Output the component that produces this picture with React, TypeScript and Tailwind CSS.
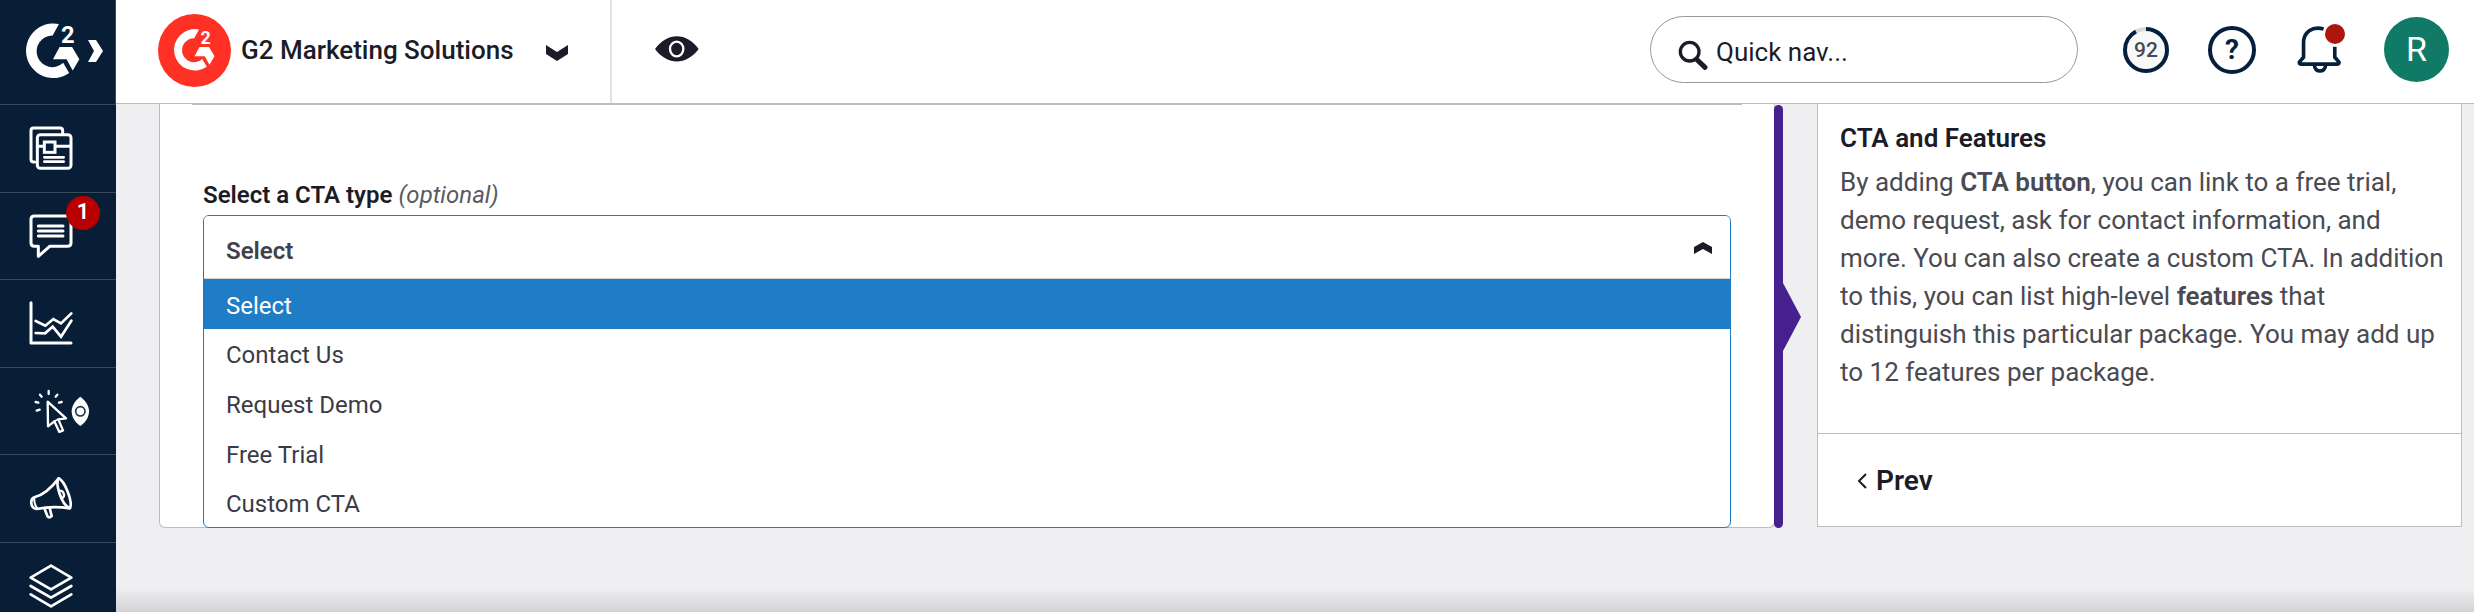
import { useState } from "react";
import type { ReactNode } from "react";

const CTA_TYPES = ["Select", "Contact Us", "Request Demo", "Free Trial", "Custom CTA"];

function G2Mark({ className }: { className: string }) {
  return (
    <svg viewBox="77 67 164 168" className={`overflow-visible ${className}`} fill="#fff" aria-hidden="true">
      <path d="M177 69 L158 104 A48 48 0 1 0 190 187 L208 218 A83 83 0 1 1 177 69 Z" />
      <path d="M179 139 H217 L239 176 L219 210 L200 176 H159 Z" />
      <text x="183" y="128" fontSize="72" fontWeight="700" fontFamily="Roboto, sans-serif">
        2
      </text>
    </svg>
  );
}

function NewsIcon() {
  return (
    <svg viewBox="86 379 132 132" className="size-11" fill="none" stroke="#fff" strokeWidth="9" aria-hidden="true">
      <path d="M103 487 H100 Q92 487 92 479 V393 Q92 385 100 385 H179 Q187 385 187 393 V399" strokeLinecap="round" />
      <rect x="111" y="405" width="101" height="101" rx="9" />
      <path d="M111 440 H132 M165 440 H212" />
      <rect x="132" y="427" width="32" height="31" />
      <path d="M132 473 H190 M132 486 H190" strokeLinecap="round" strokeWidth="8" />
    </svg>
  );
}

function ChatIcon() {
  return (
    <svg viewBox="86 640 132 132" className="size-11" fill="none" stroke="#fff" strokeWidth="9" aria-hidden="true">
      <path
        d="M102 646 H202 Q212 646 212 656 V727 Q212 737 202 737 H148 L114 767 V737 H102 Q92 737 92 727 V656 Q92 646 102 646 Z"
        strokeLinejoin="round"
      />
      <path d="M114 676 H188 M114 691 H188 M114 706 H188" strokeLinecap="round" />
    </svg>
  );
}

function ChartIcon() {
  return (
    <svg
      viewBox="86 -16 132 132"
      className="size-11"
      fill="none"
      stroke="#fff"
      strokeWidth="9"
      strokeLinecap="round"
      aria-hidden="true"
    >
      <path d="M92 -11 V110 H212" strokeLinejoin="round" />
      <path d="M106 44 L135 58 L159 38 L182 51 L213 21" strokeWidth="8" />
      <path d="M106 80 L134 81 L157 61 L182 91 L213 43" strokeWidth="8" />
    </svg>
  );
}

function CursorIcon() {
  return (
    <svg viewBox="86 246 183 132" className="h-11 w-[61px]" fill="none" stroke="#fff" strokeWidth="7" aria-hidden="true">
      <path d="M142 284 L143 358 L162 343 L177 375 L188 370 L174 337 L197 334 Z" strokeLinejoin="round" />
      <path d="M162 343 L174 337" strokeWidth="5" />
      <path
        d="M145 252 V261 M119 263 L124 269 M171 263 L166 269 M106 285 L114 287 M184 285 L176 287 M109 311 L118 308"
        strokeLinecap="round"
      />
      <path
        d="M240 269 C258 283 266 298 266 313 C266 330 256 347 240 357 C224 347 214 330 214 313 C214 298 222 283 240 269 Z"
        fill="#fff"
        stroke="none"
      />
      <circle cx="240" cy="313" r="14" stroke="#1e334c" strokeWidth="5" />
    </svg>
  );
}

function MegaphoneIcon() {
  return (
    <svg
      viewBox="86 510 132 132"
      className="size-11"
      fill="none"
      stroke="#fff"
      strokeWidth="8"
      strokeLinejoin="round"
      strokeLinecap="round"
      aria-hidden="true"
    >
      <path d="M102 574 C128 567 154 545 175 517 C192 524 218 586 209 607 C178 602 142 602 109 609 C90 607 88 580 102 574 Z" />
      <path d="M102 575 C101 589 104 600 112 608" strokeWidth="6" />
      <path d="M175 517 C164 532 182 594 207 606" />
      <path d="M176 555 C188 550 198 570 184 577" strokeWidth="7" />
      <path d="M133 609 L142 632 Q147 637 154 630 L148 606" />
    </svg>
  );
}

function LayersIcon() {
  return (
    <svg
      viewBox="86 772 132 132"
      className="size-11"
      fill="none"
      stroke="#fff"
      strokeWidth="8"
      strokeLinejoin="round"
      strokeLinecap="round"
      aria-hidden="true"
    >
      <path d="M152 777 L213 813 L152 848 L91 813 Z" />
      <path d="M91 838 L152 873 L213 838" />
      <path d="M91 863 L152 899 L213 863" />
    </svg>
  );
}

function BellIcon() {
  return (
    <svg viewBox="51 75 132 146" className="h-12 w-11" fill="none" stroke="#04203d" strokeWidth="11" aria-hidden="true">
      <path d="M131 84 C96 74 70 95 70 126 V170 L57 185 Q57 191 64 191 H171 Q178 191 178 185 L165 170 V138" strokeLinejoin="round" />
      <path d="M103 194 C103 218 137 218 137 194" />
    </svg>
  );
}

const NAV_ITEMS: { label: string; icon: ReactNode; count?: number }[] = [
  { label: "Profile", icon: <NewsIcon /> },
  { label: "Messages", icon: <ChatIcon />, count: 1 },
  { label: "Analytics", icon: <ChartIcon /> },
  { label: "Buyer intent", icon: <CursorIcon /> },
  { label: "Campaigns", icon: <MegaphoneIcon /> },
  { label: "Integrations", icon: <LayersIcon /> },
];

function Sidebar() {
  return (
    <aside className="flex w-[116px] shrink-0 flex-col bg-[#081e36]">
      <a
        href="#home"
        aria-label="Home"
        className="flex h-[105px] shrink-0 items-center gap-2 border-r border-b border-[#38495c] pb-[3px] pl-[26px]"
      >
        <G2Mark className="h-14 w-[54px]" />
        <svg viewBox="0 0 16 22" className="h-[22px] w-4" fill="#fff" aria-hidden="true">
          <path d="M0 0 H8 L15 11 L8 22 H0 L6 11 Z" />
        </svg>
      </a>
      <nav className="grid h-[525px] shrink-0 grid-rows-6">
        {NAV_ITEMS.map((item) => (
          <a
            key={item.label}
            href={`#${item.label.toLowerCase().replace(" ", "-")}`}
            aria-label={item.label}
            className="relative flex items-center border-b border-[#38495c] pl-[29px]"
          >
            {item.icon}
            {item.count && (
              <span className="absolute top-[3px] left-[66px] flex size-[34px] items-center justify-center rounded-full bg-[#b80000] pb-[2px] text-[22px] leading-none font-semibold text-white">
                {item.count}
              </span>
            )}
          </a>
        ))}
      </nav>
    </aside>
  );
}

function Header() {
  return (
    <header className="flex h-[104px] shrink-0 items-stretch border-b border-[#bdbdbd] bg-white">
      <button type="button" className="flex items-center border-r-2 border-[#e2e2e2] pr-[42px] pb-[3px] pl-[42px]">
        <span className="flex size-[73px] items-center justify-center rounded-full bg-[#ff3024]">
          <G2Mark className="h-[42px] w-[41px]" />
        </span>
        <span className="ml-[10px] text-[26px] font-medium text-[#1b1c27]">G2 Marketing Solutions</span>
        <svg viewBox="0 0 22 16" className="mt-[6px] ml-8 h-4 w-[22px]" fill="#1b1c27" aria-hidden="true">
          <path d="M0 0 L11 7 L22 0 V9 L11 16 L0 9 Z" />
        </svg>
      </button>
      <button type="button" aria-label="Preview" className="pb-[5px] pl-[43px]">
        <svg viewBox="403 110 132 78" className="h-[26px] w-11" aria-hidden="true">
          <path d="M403 149 C440 98 497 98 534 149 C497 199 440 199 403 149 Z" fill="#1b1c27" />
          <ellipse cx="468" cy="149" rx="20" ry="22" fill="none" stroke="#fff" strokeWidth="7" />
        </svg>
      </button>
      <div className="ml-auto flex items-center pr-[25px] pb-1">
        <label className="flex h-[67px] w-[428px] items-center rounded-full border border-[#999] pl-[27px]">
          <svg viewBox="114 121 90 90" className="mt-[10px] size-[30px]" fill="none" stroke="#1b1c27" aria-hidden="true">
            <circle cx="149" cy="156" r="28" strokeWidth="10" />
            <path d="M172 181 L195 203" strokeWidth="15" strokeLinecap="round" />
          </svg>
          <input
            type="search"
            aria-label="Quick nav"
            placeholder="Quick nav..."
            className="mt-[6px] ml-2 min-w-0 flex-1 bg-transparent text-[26px] text-[#1b1c27] outline-none placeholder:text-[#1b1c27]"
          />
        </label>
        <button
          type="button"
          aria-label="Profile score"
          className="relative ml-11 flex size-12 items-center justify-center text-[21px] font-medium text-[#494951]"
        >
          <svg viewBox="0 0 48 48" className="absolute inset-0 size-12" fill="none" strokeWidth="4" aria-hidden="true">
            <circle cx="24" cy="24" r="21" stroke="#d3dae0" fill="#f8f8f8" />
            <circle cx="24" cy="24" r="21" stroke="#04203d" pathLength="100" strokeDasharray="92 8" transform="rotate(-90 24 24)" />
          </svg>
          <span className="relative pt-[2px]">92</span>
        </button>
        <button
          type="button"
          aria-label="Help"
          className="ml-[38px] flex size-12 items-center justify-center rounded-full border-4 border-[#04203d] text-[28px] leading-none font-bold text-[#04203d]"
        >
          ?
        </button>
        <button type="button" aria-label="Notifications" className="relative ml-[41px]">
          <BellIcon />
          <span className="absolute -top-[2px] left-7 size-5 rounded-full bg-[#ae1410]" />
        </button>
        <button
          type="button"
          aria-label="Account"
          className="ml-[43px] flex size-[65px] items-center justify-center rounded-full bg-[#117a67] text-[34px] text-white"
        >
          R
        </button>
      </div>
    </header>
  );
}

function CtaTypeField() {
  const [value, setValue] = useState(CTA_TYPES[0]);
  return (
    <div className="flex flex-col">
      <label htmlFor="cta-type" className="mb-[5px] text-[24px] leading-[30px] font-semibold text-[#1b1c27]">
        Select a CTA type <em className="font-normal text-[#5a5a62]">(optional)</em>
      </label>
      <div className="overflow-hidden rounded-md border border-[#207cc4]">
        <div className="relative">
          <select
            id="cta-type"
            value={value}
            onChange={(event) => setValue(event.target.value)}
            className="block h-[63px] w-full appearance-none border-b border-[#d2d2d2] bg-white px-[22px] pt-2 text-[24px] font-semibold text-[#41414b] outline-none"
          >
            {CTA_TYPES.map((type) => (
              <option key={type}>{type}</option>
            ))}
          </select>
          <svg
            viewBox="0 0 18 12"
            className="pointer-events-none absolute top-[26px] right-[18px] h-3 w-[18px]"
            fill="#1b1c27"
            aria-hidden="true"
          >
            <path d="M0 5 L9 0 L18 5 V12 L9 7 L0 12 Z" />
          </svg>
        </div>
        <ul role="listbox" aria-label="CTA type" className="grid h-[248px] grid-rows-5">
          {CTA_TYPES.map((type) => (
            <li
              key={type}
              role="option"
              aria-selected={type === value}
              onClick={() => setValue(type)}
              className="flex items-center px-[22px] pt-1 text-[24px] leading-8 text-[#3b3b46] aria-selected:bg-[#207cc4] aria-selected:text-white"
            >
              {type}
            </li>
          ))}
        </ul>
      </div>
    </div>
  );
}

function HelpPanel() {
  return (
    <aside className="flex w-[645px] shrink-0 flex-col self-start border border-t-0 border-[#bdbdbd] bg-white">
      <div className="border-b border-[#bdbdbd] pt-4 pr-4 pb-[42px] pl-[22px]">
        <h2 className="mb-[7px] text-[26px] leading-[36px] font-semibold text-[#1b1c27]">CTA and Features</h2>
        <p className="text-[26px] leading-[38px] text-[#4a4a53]">
          By adding <strong className="font-semibold">CTA button</strong>, you can link to a free trial, demo request, ask for
          contact information, and more. You can also create a custom CTA. In addition to this, you can list high-level{" "}
          <strong className="font-semibold">features</strong> that distinguish this particular package. You may add up to 12
          features per package.
        </p>
      </div>
      <button type="button" className="flex h-[92px] items-center gap-[9px] pt-[2px] pl-[39px] text-[28px] font-semibold text-[#1b1c27]">
        <svg viewBox="0 0 10 16" className="h-4 w-[10px]" fill="none" stroke="#1b1c27" strokeWidth="2" aria-hidden="true">
          <path d="M9 1 L2 8 L9 15" />
        </svg>
        Prev
      </button>
    </aside>
  );
}

export default function App() {
  return (
    <div className="flex h-screen overflow-hidden bg-[#efeff1] font-[Roboto,sans-serif]">
      <Sidebar />
      <div className="relative flex min-w-0 flex-1 flex-col">
        <Header />
        <main className="flex items-start pr-3 pl-[43px]">
          <section className="min-w-0 flex-1 rounded-b-md border border-t-0 border-[#bdbdbd] bg-white">
            <hr className="mr-8 mb-[75px] ml-8 border-[#bdbdbd]" />
            <div className="-mb-px px-[43px]">
              <CtaTypeField />
            </div>
          </section>
          <div className="-ml-px flex w-[27px] shrink-0 items-center self-stretch pt-px">
            <div className="w-[9px] shrink-0 self-stretch rounded-full bg-[#46208f]" />
            <svg viewBox="0 0 18 68" className="h-[68px] w-[18px]" fill="#46208f" aria-hidden="true">
              <path d="M0 0 L18 34 L0 68 Z" />
            </svg>
          </div>
          <div className="w-4 shrink-0" />
          <HelpPanel />
        </main>
        <div className="pointer-events-none absolute inset-x-0 bottom-0 h-6 bg-gradient-to-b from-transparent to-black/12" />
      </div>
    </div>
  );
}
